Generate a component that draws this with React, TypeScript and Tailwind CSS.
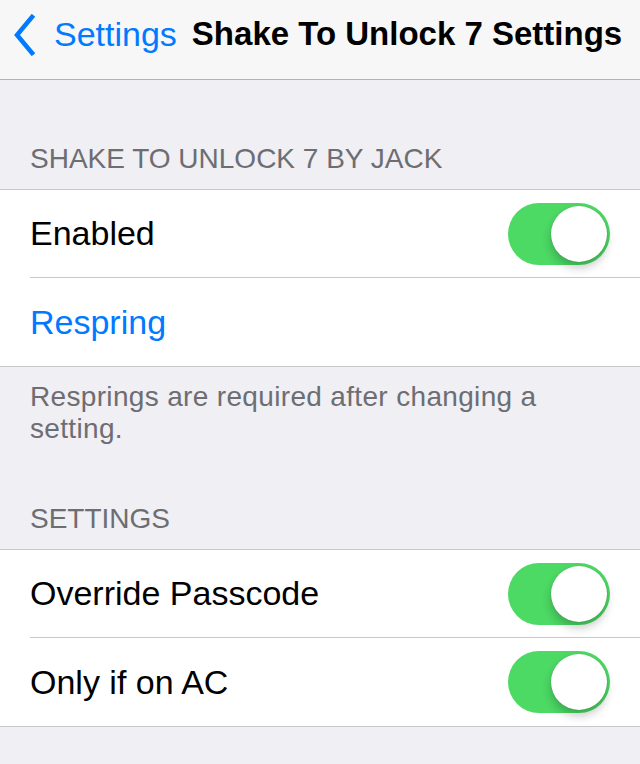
import { useState } from "react";

const font = { fontFamily: '"Liberation Sans", Arial, sans-serif' };

function Toggle({ on, onChange }: { on: boolean; onChange: () => void }) {
  return (
    <button
      type="button"
      onClick={onChange}
      className={`relative h-[62px] w-[102px] rounded-full ${on ? "bg-[#4cd964]" : "bg-[#e5e5ea]"}`}
    >
      <span
        className={`absolute top-[3px] h-[56px] w-[56px] rounded-full bg-white shadow-[0_6px_10px_rgba(0,0,0,0.22),0_0_1px_rgba(0,0,0,0.3)] ${on ? "left-[43px]" : "left-[3px]"}`}
      />
    </button>
  );
}

function Row({ label, last, children, blue }: { label: string; last?: boolean; children?: React.ReactNode; blue?: boolean }) {
  return (
    <div className="pl-[30px]">
      <div className={`flex h-[88px] items-center justify-between pr-[30px] ${last ? "" : "border-b border-[#c8c7cc]"}`}>
        <span className={`text-[34px] ${blue ? "text-[#007aff]" : "text-black"}`}>{label}</span>
        {children}
      </div>
    </div>
  );
}

export default function App() {
  const [enabled, setEnabled] = useState(true);
  const [override, setOverride] = useState(true);
  const [ac, setAc] = useState(true);

  return (
    <div style={font} className="h-[764px] w-[640px] overflow-hidden bg-[#efeff4]">
      <header className="flex h-[80px] items-center border-b border-[#b2b2b2] bg-[#f7f7f7] pb-[11px]">
        <svg width="22" height="42" viewBox="0 0 22 42" className="ml-[13px] mt-[1px]">
          <path d="M19 3 L4 21 L19 39" fill="none" stroke="#007aff" strokeWidth="4.5" strokeLinecap="square" />
        </svg>
        <span className="ml-[19px] text-[34px] text-[#007aff]">Settings</span>
        <span className="ml-[15px] text-[33px] font-bold text-black">Shake To Unlock 7 Settings</span>
      </header>

      <p className="px-[30px] pt-[63px] pb-[14px] text-[28px] leading-[32px] text-[#6d6d72]">SHAKE TO UNLOCK 7 BY JACK</p>
      <div className="border-y border-[#c8c7cc] bg-white">
        <Row label="Enabled">
          <Toggle on={enabled} onChange={() => setEnabled(!enabled)} />
        </Row>
        <Row label="Respring" blue last />
      </div>
      <p className="w-[580px] px-[30px] pt-[14px] text-[28px] leading-[32px] tracking-[0.012em] text-[#6d6d72]">
        Resprings are required after changing a setting.
      </p>

      <p className="px-[30px] pt-[58px] pb-[14px] text-[28px] leading-[32px] text-[#6d6d72]">SETTINGS</p>
      <div className="border-y border-[#c8c7cc] bg-white">
        <Row label="Override Passcode">
          <Toggle on={override} onChange={() => setOverride(!override)} />
        </Row>
        <Row label="Only if on AC" last>
          <Toggle on={ac} onChange={() => setAc(!ac)} />
        </Row>
      </div>
    </div>
  );
}
